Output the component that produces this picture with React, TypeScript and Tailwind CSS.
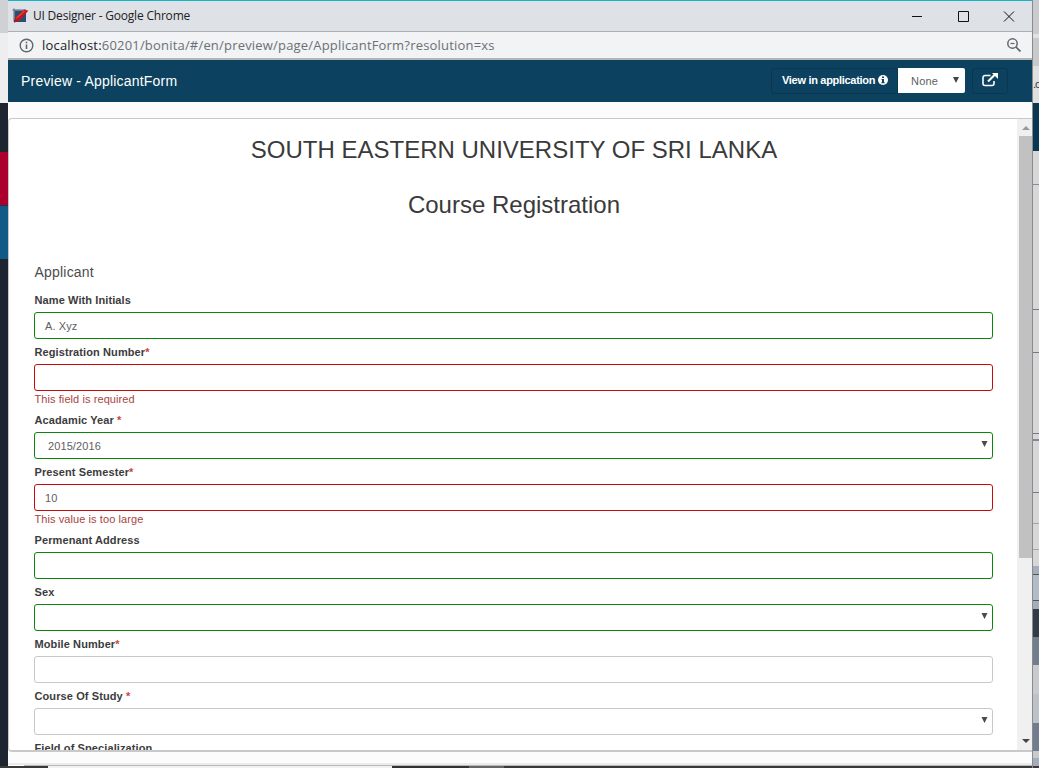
import type { ReactNode } from "react";

type Status = "valid" | "invalid" | "plain";

const borders: Record<Status, string> = {
  valid: "border-[#0a860a]",
  invalid: "border-[#c80a0a]",
  plain: "border-[#c8c8c8]",
};

interface FieldProps {
  label: string;
  star?: string;
  value?: string;
  status: Status;
  select?: boolean;
  error?: string;
}

function Field({ label, star, value, status, select, error }: FieldProps) {
  return (
    <div className="shrink-0">
      <div className="h-[25px] pt-[5px] pl-[0.5px] text-[11px] leading-4 font-bold tracking-[0.1px] whitespace-pre text-[#3c3c3c]">
        {label}
        {star && <span className="text-[#d04040]">{star}</span>}
      </div>
      <div
        className={`flex h-[27px] items-center justify-between rounded-[3px] border bg-white pr-[4px] text-[11px] text-[#606060] ${select ? "pl-[13px]" : "pl-[10px]"} ${borders[status]}`}
      >
        <span className="pt-px tracking-[0.1px]">{value}</span>
        {select && (
          <svg className="mb-[3px] h-[6px] w-[7px]" viewBox="0 0 7 6" fill="#4a4a4a">
            <path d="M.5 0h6L3.500 6z" />
          </svg>
        )}
      </div>
      {error && <div className="h-4 pl-[0.5px] text-[11px] leading-4 tracking-[0.08px] text-[#a94442]">{error}</div>}
    </div>
  );
}

function Strip({ h, c, children }: { h: string; c: string; children?: ReactNode }) {
  return <div className={`w-full shrink-0 ${h} ${c}`}>{children}</div>;
}

function TitleBar() {
  return (
    <div className="flex h-8 shrink-0 items-center border-t border-b border-t-[#14b4c8] border-b-[#adb0b3] bg-[#dee1e6] pl-1 text-[#222]">
      <svg className="h-4 w-[17px]" viewBox="0 0 17 16">
        <path d="M2.500 2.500h11.500v11.500H2.500z" fill="#2a4d70" />
        <path d="M.5 2h13M2 .5v13" stroke="#5c6470" strokeWidth="1" />
        <path d="M2 14.500l1-4.500L12.500 1.500l3.800 1.300L7.500 12.500z" fill="#c9151b" />
        <path d="M4.500 10l8-7" stroke="#e8413c" strokeWidth="1.300" />
        <path d="M2 14.500l.8-3.500 3 2.500z" fill="#8f2028" />
      </svg>
      <span className="ml-1 w-[180px] text-[12px] leading-4 tracking-[-0.2px] whitespace-nowrap">UI Designer - Google Chrome</span>
      <svg className="ml-auto h-[11px] w-[105px]" viewBox="0 0 105 11" fill="none" stroke="#111">
        <path d="M0 5.500h10" />
        <path d="M46.500 .5h10v10h-10z" />
        <path d="M92 .5l10 10M102 .5l-10 10" />
      </svg>
      <span className="w-[15px]" />
    </div>
  );
}

function AddressBar() {
  return (
    <div className="flex h-7 shrink-0 items-center border-b-2 border-[#b3b5b7] bg-[#f1f3f4] pl-[11px] text-[#6c7074]">
      <svg className="h-[15px] w-[15px]" viewBox="0 0 15 15" fill="none" stroke="#62666a" strokeWidth="1.4">
        <circle cx="7.500" cy="7.500" r="6.300" />
        <path d="M7.500 6.500v4.500M7.500 3.700v1.500" strokeWidth="1.600" />
      </svg>
      <span className="ml-2 text-[13px] leading-4 tracking-[0.19px] whitespace-nowrap">
        <span className="text-[#222]">localhost:</span>60201/bonita/#/en/preview/page/ApplicantForm?resolution=xs
      </span>
      <svg className="mr-[11px] ml-auto h-[14px] w-[14px]" viewBox="0 0 14 14" fill="none" stroke="#62666a" strokeWidth="1.500">
        <circle cx="5.500" cy="5.500" r="4.700" />
        <path d="M9 9l4.500 4.500" strokeWidth="1.700" />
        <path d="M3.500 5.500h4" strokeWidth="1.200" />
      </svg>
    </div>
  );
}

function Header() {
  return (
    <div className="flex h-[42px] shrink-0 items-center bg-[#0c4260] pl-[13px] text-white">
      <span className="text-[14px] leading-5 tracking-[0.2px]">Preview - ApplicantForm</span>
      <div className="ml-auto flex h-[26px] w-[127px] items-center rounded-l-[3px] border border-[#0a3650] pb-[2px] pl-[10px]">
        <span className="text-[11px] leading-4 font-bold tracking-[-0.3px] whitespace-nowrap">View in application</span>
        <svg className="ml-[3px] h-[10px] w-[10px]" viewBox="0 0 10 10">
          <circle cx="5" cy="5" r="5" fill="#fff" />
          <path d="M4 1.500h2v1.500H4zM3.500 4H6v3.300h.7v1H3.400v-1H4V5h-.5z" fill="#0c4260" />
        </svg>
      </div>
      <div className="mb-px flex h-[25px] w-[67px] items-center justify-between rounded-r-[2px] bg-white pr-[6px] pl-[13px] text-[11px] text-[#606060]">
        <span className="pt-[2px] tracking-[0.2px]">None</span>
        <svg className="mb-[2px] h-[6px] w-[6px]" viewBox="0 0 6 6" fill="#444">
          <path d="M0 0h6L3 6z" />
        </svg>
      </div>
      <div className="mr-[24px] ml-[7px] flex h-[26px] w-9 items-center justify-center rounded-[3px] border border-[#0a3650]">
        <svg className="mb-[2px] h-[14px] w-4" viewBox="0 0 16 14" fill="none" stroke="#fff">
          <path d="M8.500 2.500H3A2 2 0 0 0 1 4.500v6a2 2 0 0 0 2 2h7a2 2 0 0 0 2-2V8" strokeWidth="1.600" />
          <path d="M6 8.500l7-7" strokeWidth="2.200" />
          <path d="M10 0h6v6z" fill="#fff" stroke="none" />
        </svg>
      </div>
    </div>
  );
}

function Form() {
  return (
    <div className="flex min-w-0 flex-1 flex-col overflow-hidden pr-[24px] pl-[25px]">
      <h1 className="mt-[15px] h-8 shrink-0 pl-px text-center text-[24px] leading-8 whitespace-nowrap text-[#3a3a3a]">SOUTH EASTERN UNIVERSITY OF SRI LANKA</h1>
      <h2 className="mt-[23px] h-8 shrink-0 pl-px text-center text-[24px] leading-8 whitespace-nowrap text-[#3a3a3a]">Course Registration</h2>
      <div className="mt-[41px] h-[25px] shrink-0 pl-[0.5px] text-[14px] leading-5 tracking-[0.2px] text-[#4c4c4c]">Applicant</div>
      <Field label="Name With Initials" value="A. Xyz" status="valid" />
      <Field label="Registration Number" star="*" status="invalid" error="This field is required" />
      <Field label="Acadamic Year " star="*" value="2015/2016" status="valid" select />
      <Field label="Present Semester" star="*" value="10" status="invalid" error="This value is too large" />
      <Field label="Permenant Address" status="valid" />
      <Field label="Sex" status="valid" select />
      <Field label="Mobile Number" star="*" status="plain" />
      <Field label="Course Of Study " star="*" status="plain" select />
      <Field label="Field of Specialization" status="plain" select />
    </div>
  );
}

function ScrollBar() {
  return (
    <div className="flex w-[15px] shrink-0 flex-col items-center bg-[#f0f0f0]">
      <svg className="mt-[7px] ml-[2px] h-[4px] w-[8px] shrink-0" viewBox="0 0 8 4" fill="#999">
        <path d="M0 4L4 0l4 4z" />
      </svg>
      <div className="mt-[6px] ml-[2px] h-[422px] w-[13px] shrink-0 bg-[#c1c1c1]" />
      <svg className="mt-auto mb-[7px] ml-[2px] h-[4px] w-[8px]" viewBox="0 0 8 4" fill="#444">
        <path d="M0 0h8L4 4z" />
      </svg>
    </div>
  );
}

export default function App() {
  return (
    <div className="flex h-[768px] w-[1039px] overflow-hidden bg-[#fcfcfc] font-['Liberation_Sans',Arial,sans-serif]">
      <div className="flex w-2 shrink-0 flex-col">
        <Strip h="h-[33px]" c="bg-[#cfd1d5]" />
        <Strip h="h-[70px]" c="bg-[#eeeeef]" />
        <Strip h="h-[49px]" c="bg-[#1c2530]" />
        <Strip h="h-[53px]" c="bg-[#ab002d]" />
        <Strip h="h-[1px]" c="bg-[#25304b]" />
        <Strip h="h-[53px]" c="bg-[#0f5b85]" />
        <Strip h="h-[507px]" c="bg-[#1c2530]" />
        <Strip h="h-[2px]" c="bg-[#3b3b3b]" />
      </div>
      <div className="flex w-[1024px] shrink-0 flex-col">
        <div className="shrink-0 font-['Open_Sans','Noto_Sans',sans-serif]">
          <TitleBar />
          <AddressBar />
        </div>
        <Header />
        <div className="h-4 shrink-0 bg-[#fcfcfc]" />
        <div className="flex h-[634px] shrink-0 rounded-l-[4px] border-t border-b-2 border-l border-[#c9c9c9] bg-white">
          <Form />
          <ScrollBar />
        </div>
        <div className="h-[11px] shrink-0 bg-[#fcfcfc]" />
        <div className="h-[2px] shrink-0 bg-[#ececec]" />
        <div className="ml-4 h-px shrink-0 bg-[#b8b8b8]" />
        <div className="flex h-[2px] shrink-0">
          <div className="w-[40px] bg-[#3b3b3b]" />
          <div className="w-[344px] bg-[#f2f2f2]" />
          <div className="w-[77px] bg-[#333]" />
          <div className="w-[35px] bg-[#666]" />
          <div className="flex-1 bg-[#3b3b3b]" />
        </div>
      </div>
      <div className="flex w-[7px] shrink-0 flex-col border-l border-[#888b8f]">
        <Strip h="h-[34px]" c="bg-[#c9cbcf]" />
        <Strip h="h-[4px]" c="bg-[#e1e1e1]" />
        <Strip h="h-[28px]" c="bg-[#c8c9cb]" />
        <Strip h="h-[37px]" c="bg-[#e0e0e0]">
          <div className="h-full overflow-hidden pt-[10px] text-[11px] leading-4 tracking-[-1px] text-[#333]">.c</div>
        </Strip>
        <Strip h="h-[48px]" c="bg-[#073752]" />
        <Strip h="h-[33px]" c="bg-[#d8d7d8]" />
        <Strip h="h-px" c="bg-[#8888a0]" />
        <Strip h="h-[124px]" c="bg-[#d8d7d8]" />
        <Strip h="h-px" c="bg-[#77778c]" />
        <Strip h="h-[42px]" c="bg-[#d8d7d8]" />
        <Strip h="h-px" c="bg-[#77778c]" />
        <Strip h="h-[80px]" c="bg-[#d8d7d8]" />
        <Strip h="h-px" c="bg-[#77778c]" />
        <Strip h="h-[5px]" c="bg-[#d8d7d8]" />
        <Strip h="h-[2px]" c="bg-[#85859a]" />
        <Strip h="h-[51px]" c="bg-[#d8d7d8]" />
        <Strip h="h-px" c="bg-[#77778c]" />
        <Strip h="h-[30px]" c="bg-[#d8d7d8]" />
        <Strip h="h-px" c="bg-[#a5a5a5]" />
        <Strip h="h-[25px]" c="bg-[#d8d7d8]" />
        <Strip h="h-px" c="bg-[#a5a5a5]" />
        <Strip h="h-[16px]" c="bg-[#d8d7d8]" />
        <Strip h="h-[8px]" c="bg-[#a3adbb]" />
        <Strip h="h-px" c="bg-[#50555c]" />
        <Strip h="h-[25px]" c="bg-[#b2bcc9]" />
        <Strip h="h-px" c="bg-[#50555c]" />
        <Strip h="h-[8px]" c="bg-[#a3adbb]" />
        <Strip h="h-[28px]" c="bg-[#333c46]" />
        <Strip h="h-[28px]" c="bg-[#717d8d]" />
        <Strip h="h-[29px]" c="bg-[#c9cacc]" />
        <Strip h="h-[29px]" c="bg-[#bcc2c8]" />
        <Strip h="h-[28px]" c="bg-[#717d8d]" />
        <Strip h="h-[7px]" c="bg-[#c9cacc]" />
        <Strip h="h-[8px]" c="bg-[#a3adbb]" />
        <Strip h="h-[2px]" c="bg-[#3b3b3b]" />
      </div>
    </div>
  );
}
